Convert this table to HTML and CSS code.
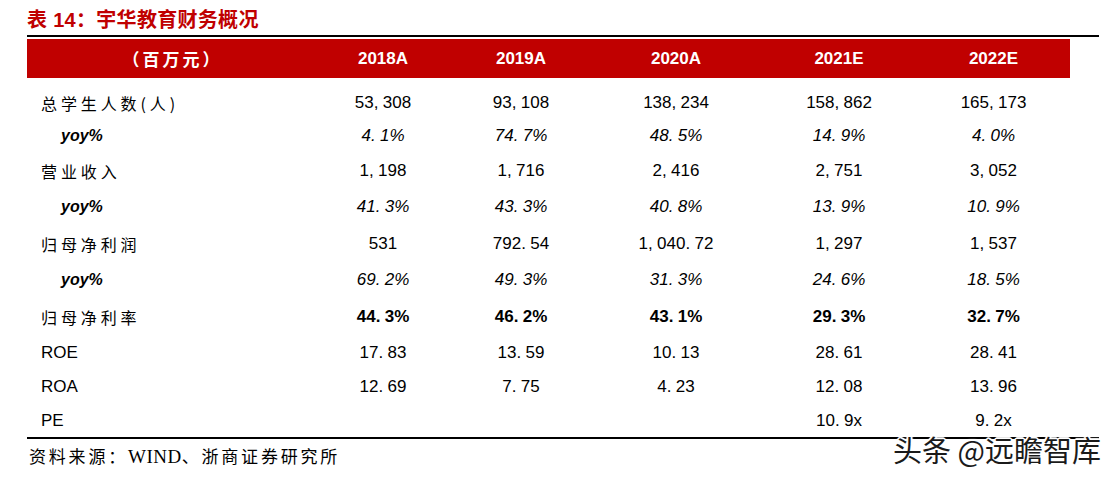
FILE: index.html
```html
<!DOCTYPE html>
<html lang="zh-CN">
<head>
<meta charset="utf-8">
<title>表 14：宇华教育财务概况</title>
<link rel="stylesheet" href="styles.css">
</head>
<body>
<div class="page">
  <h1 class="title">表 14：宇华教育财务概况</h1>
  <div class="rule rule-top"></div>
  <table class="fin">
    <colgroup>
      <col class="c-label"><col class="c1"><col class="c2"><col class="c3"><col class="c4"><col class="c5">
    </colgroup>
    <thead>
      <tr>
        <th class="h-label">（百万元）</th>
        <th>2018A</th><th>2019A</th><th>2020A</th><th>2021E</th><th>2022E</th>
      </tr>
    </thead>
    <tbody>
      <tr class="r-first">
        <td class="lbl">总学生人数(人)</td>
        <td>53<span class="p">,</span>308</td><td>93<span class="p">,</span>108</td><td>138<span class="p">,</span>234</td><td>158<span class="p">,</span>862</td><td>165<span class="p">,</span>173</td>
      </tr>
      <tr class="r-34 yoy">
        <td class="lbl sub">yoy%</td>
        <td>4<span class="p">.</span>1%</td><td>74<span class="p">.</span>7%</td><td>48<span class="p">.</span>5%</td><td>14<span class="p">.</span>9%</td><td>4<span class="p">.</span>0%</td>
      </tr>
      <tr class="r-36">
        <td class="lbl">营业收入</td>
        <td>1<span class="p">,</span>198</td><td>1<span class="p">,</span>716</td><td>2<span class="p">,</span>416</td><td>2<span class="p">,</span>751</td><td>3<span class="p">,</span>052</td>
      </tr>
      <tr class="r-36 yoy">
        <td class="lbl sub">yoy%</td>
        <td>41<span class="p">.</span>3%</td><td>43<span class="p">.</span>3%</td><td>40<span class="p">.</span>8%</td><td>13<span class="p">.</span>9%</td><td>10<span class="p">.</span>9%</td>
      </tr>
      <tr class="r-37">
        <td class="lbl">归母净利润</td>
        <td>531</td><td>792<span class="p">.</span>54</td><td>1<span class="p">,</span>040<span class="p">.</span>72</td><td>1<span class="p">,</span>297</td><td>1<span class="p">,</span>537</td>
      </tr>
      <tr class="r-36 yoy">
        <td class="lbl sub">yoy%</td>
        <td>69<span class="p">.</span>2%</td><td>49<span class="p">.</span>3%</td><td>31<span class="p">.</span>3%</td><td>24<span class="p">.</span>6%</td><td>18<span class="p">.</span>5%</td>
      </tr>
      <tr class="r-37 strong">
        <td class="lbl">归母净利率</td>
        <td>44<span class="p">.</span>3%</td><td>46<span class="p">.</span>2%</td><td>43<span class="p">.</span>1%</td><td>29<span class="p">.</span>3%</td><td>32<span class="p">.</span>7%</td>
      </tr>
      <tr class="r-35">
        <td class="lbl latin">ROE</td>
        <td>17<span class="p">.</span>83</td><td>13<span class="p">.</span>59</td><td>10<span class="p">.</span>13</td><td>28<span class="p">.</span>61</td><td>28<span class="p">.</span>41</td>
      </tr>
      <tr class="r-34">
        <td class="lbl latin">ROA</td>
        <td>12<span class="p">.</span>69</td><td>7<span class="p">.</span>75</td><td>4<span class="p">.</span>23</td><td>12<span class="p">.</span>08</td><td>13<span class="p">.</span>96</td>
      </tr>
      <tr class="r-34">
        <td class="lbl latin">PE</td>
        <td></td><td></td><td></td><td>10<span class="p">.</span>9x</td><td>9<span class="p">.</span>2x</td>
      </tr>
    </tbody>
  </table>
  <div class="rule rule-bottom"></div>
  <p class="source">资料来源：<span class="src-latin">WIND</span>、浙商证券研究所</p>
  <div class="watermark">头条 @远瞻智库</div>
</div>
</body>
</html>
```

FILE: styles.css
```css
html, body {
  margin: 0;
  padding: 0;
  background: #ffffff;
}

.page {
  position: relative;
  width: 1112px;
  height: 481px;
  padding-left: 27px;
  box-sizing: border-box;
  color: #000;
  font-family: "Liberation Sans", Arial, "Noto Sans CJK SC", sans-serif;
}

.title {
  margin: 0;
  padding-top: 8px;
  height: 27px;
  box-sizing: border-box;
  font-family: "Liberation Sans", "Noto Sans CJK SC", sans-serif;
  font-size: 20px;
  line-height: 24px;
  font-weight: bold;
  color: #c00000;
  letter-spacing: 0.3px;
}

.rule {
  width: 1072px;
  height: 2px;
  background: #000;
}

.rule-top {
  margin-top: 8px;
}

.fin {
  margin-top: 2px;
  width: 1043px;
  border-collapse: collapse;
  table-layout: fixed;
}

.c-label { width: 288px; }
.c1 { width: 136px; }
.c2 { width: 140px; }
.c3 { width: 170px; }
.c4 { width: 156px; }
.c5 { width: 153px; }

.fin th {
  height: 39px;
  padding: 0;
  background: #c00000;
  color: #fff;
  font-family: "Liberation Sans", Arial, sans-serif;
  font-size: 17px;
  font-weight: bold;
  text-align: center;
  vertical-align: middle;
}

.fin th.h-label {
  font-family: "Noto Sans CJK SC", sans-serif;
  font-size: 17px;
  font-feature-settings: "halt";
  letter-spacing: 3px;
  padding-left: 3px;
}

.fin td {
  box-sizing: border-box;
  padding: 4px 0 0 0;
  text-align: center;
  vertical-align: middle;
  font-size: 17px;
  white-space: nowrap;
}

.fin td.lbl {
  text-align: left;
  padding-left: 14px;
  font-family: "Noto Sans CJK SC", sans-serif;
  font-size: 16px;
  letter-spacing: 3.9px;
}

.fin td.lbl.latin {
  font-family: "Liberation Sans", Arial, sans-serif;
  font-size: 17px;
  letter-spacing: 0;
}

.fin td.lbl.sub {
  padding-left: 34px;
  font-family: "Liberation Sans", Arial, sans-serif;
  font-style: italic;
  font-weight: bold;
  font-size: 16px;
  letter-spacing: 0;
}

.p {
  display: inline-block;
  width: 9px;
  text-align: left;
}

.yoy td { font-style: italic; }
.strong td { font-weight: bold; }
.strong td.lbl { font-weight: normal; }

.r-first td { height: 39px; padding-top: 10px; }
.r-34 td { height: 34px; }
.r-35 td { height: 35px; }
.r-36 td { height: 36px; }
.r-37 td { height: 37px; }

.rule-bottom {
  margin-top: 1px;
}

.source {
  margin: 8px 0 0 2px;
  font-family: "Liberation Serif", "Noto Sans CJK SC", serif;
  font-size: 17px;
  line-height: 20px;
  letter-spacing: 2.8px;
}

.src-latin {
  font-size: 19px;
  letter-spacing: 0.5px;
}

.watermark {
  position: absolute;
  left: 893px;
  top: 431px;
  font-family: "Noto Sans CJK SC", sans-serif;
  font-size: 29px;
  line-height: 36px;
  color: #1a1a1a;
  white-space: nowrap;
  text-shadow:
    1px 0 0 #fff, -1px 0 0 #fff, 0 1px 0 #fff, 0 -1px 0 #fff,
    1px 1px 0 #fff, -1px -1px 0 #fff, 1px -1px 0 #fff, -1px 1px 0 #fff,
    2px 0 1px #fff, -2px 0 1px #fff, 0 2px 1px #fff, 0 -2px 1px #fff;
}
```
